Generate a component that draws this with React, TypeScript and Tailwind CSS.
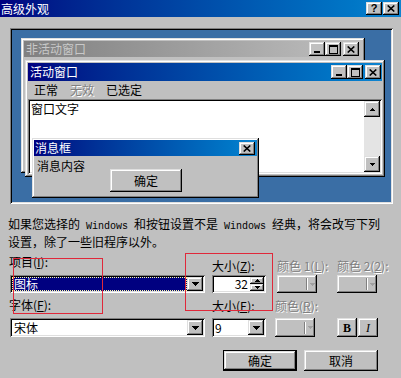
import clsx from "clsx"
import type { ReactNode } from "react"

const raised =
  "shadow-[inset_-1px_-1px_#000,inset_1px_1px_#dfdfdf,inset_-2px_-2px_#808080,inset_2px_2px_#fff]"
const sunken =
  "shadow-[inset_1px_1px_#808080,inset_-1px_-1px_#fff,inset_2px_2px_#000,inset_-2px_-2px_#dfdfdf]"
const disabledText = "text-[#808080] [text-shadow:1px_1px_0_#fff]"

function CloseGlyph() {
  return (
    <svg width="8" height="7" viewBox="0 0 8 7">
      <path d="M0.7 0.5L7.3 6.5M7.3 0.5L0.7 6.5" stroke="#000" strokeWidth="1.6" />
    </svg>
  )
}

function MinGlyph() {
  return (
    <svg width="8" height="8" viewBox="0 0 8 8" shapeRendering="crispEdges">
      <rect x="1" y="6" width="6" height="2" fill="#000" />
    </svg>
  )
}

function MaxGlyph() {
  return (
    <svg width="9" height="9" viewBox="0 0 9 9" shapeRendering="crispEdges">
      <rect x="0.5" y="0.5" width="8" height="8" fill="none" stroke="#000" />
      <rect x="0" y="0" width="9" height="2" fill="#000" />
    </svg>
  )
}

function DownArrow({ disabled }: { disabled?: boolean }) {
  return (
    <svg width="7" height="4" viewBox="0 0 7 4" shapeRendering="crispEdges">
      <path
        d="M0 0h7v1h-1v1h-1v1h-1v1h-1v-1h-1v-1h-1v-1h-1z"
        fill={disabled ? "#808080" : "#000"}
      />
    </svg>
  )
}

function SmallArrow({ up, disabled }: { up?: boolean; disabled?: boolean }) {
  return (
    <svg width="5" height="3" viewBox="0 0 5 3" shapeRendering="crispEdges">
      <path
        d={up ? "M2 0h1v1h1v1h1v1h-5v-1h1v-1h1z" : "M0 0h5v1h-1v1h-1v1h-1v-1h-1v-1h-1z"}
        fill={disabled ? "#a0a0a0" : "#000"}
      />
    </svg>
  )
}

function CapButton({
  children,
  className,
}: {
  children?: ReactNode
  className?: string
}) {
  return (
    <div
      className={clsx(
        "flex shrink-0 items-center justify-center bg-[#c0c0c0]",
        raised,
        className,
      )}
    >
      {children}
    </div>
  )
}

function Combo({
  children,
  className,
}: {
  children?: ReactNode
  className?: string
}) {
  return (
    <div className={clsx("flex bg-white p-[2px]", sunken, className)}>
      <div className="flex min-w-0 flex-1 items-center">{children}</div>
      <CapButton className="w-[16px]">
        <DownArrow />
      </CapButton>
    </div>
  )
}

function ColorButton({ className }: { className?: string }) {
  return (
    <div className={clsx("flex w-[40px] items-center bg-[#c0c0c0]", raised, className)}>
      <div className="flex-1" />
      <div className="h-[12px] border-l border-r border-l-[#808080] border-r-white" />
      <div className="flex w-[9px] justify-center">
        <SmallArrow disabled />
      </div>
    </div>
  )
}

function Mono({ children }: { children: ReactNode }) {
  return (
    <span className="font-['Liberation_Mono',monospace] text-[10px] whitespace-pre">
      {children}
    </span>
  )
}

export default function App() {
  return (
    <div className="relative h-[378px] w-[401px] overflow-hidden bg-[#c0c0c0] font-['Noto_Sans_CJK_SC',sans-serif] text-[12px] text-black">
      {/* title bar */}
      <div className="flex h-[17px] items-center bg-linear-to-r from-[#000080] to-[#1084d0] pr-[2px] pl-[1px]">
        <span className="leading-[14px] text-white">高级外观</span>
        <div className="ml-auto flex gap-[1px]">
          <CapButton className="h-[13px] w-[16px] font-['Liberation_Sans',sans-serif] text-[11px] leading-none font-bold">
            ?
          </CapButton>
          <CapButton className="h-[13px] w-[16px]">
            <CloseGlyph />
          </CapButton>
        </div>
      </div>

      {/* preview */}
      <div className={clsx("relative mt-[11px] ml-[10px] h-[176px] w-[383px] bg-[#3a6ea5]", sunken)}>
        {/* inactive window */}
        <div className={clsx("absolute top-[10px] left-[11px] h-[135px] w-[344px] bg-[#c0c0c0] p-[3px]", raised)}>
          <div className="flex h-[16px] items-center bg-linear-to-r from-[#808080] to-[#c0c0c0] pr-[3px] pl-[2px]">
            <span className="leading-[14px] text-[#c8c8c8]">非活动窗口</span>
            <div className="ml-auto flex">
              <CapButton className="h-[14px] w-[16px]">
                <MinGlyph />
              </CapButton>
              <CapButton className="h-[14px] w-[16px]">
                <MaxGlyph />
              </CapButton>
              <CapButton className="ml-[2px] h-[14px] w-[16px]">
                <CloseGlyph />
              </CapButton>
            </div>
          </div>
        </div>

        {/* active window */}
        <div className={clsx("absolute top-[32px] left-[15px] flex h-[117px] w-[360px] flex-col bg-[#c0c0c0] p-[3px]", raised)}>
          <div className="flex h-[18px] shrink-0 items-center bg-linear-to-r from-[#000080] to-[#1084d0] pr-[1px] pl-[2px]">
            <span className="leading-[14px] text-white">活动窗口</span>
            <div className="ml-auto flex">
              <CapButton className="h-[14px] w-[16px]">
                <MinGlyph />
              </CapButton>
              <CapButton className="h-[14px] w-[16px]">
                <MaxGlyph />
              </CapButton>
              <CapButton className="ml-[2px] h-[14px] w-[16px]">
                <CloseGlyph />
              </CapButton>
            </div>
          </div>
          <div className="flex h-[18px] shrink-0 items-center gap-[12px] pl-[6px] leading-[14px]">
            <span>正常</span>
            <span className={disabledText}>无效</span>
            <span>已选定</span>
          </div>
          <div className={clsx("flex min-h-0 flex-1 bg-white p-[2px]", sunken)}>
            <div className="flex-1 pt-[1px] pl-[1px] leading-[14px]">窗口文字</div>
            <div className="flex w-[16px] flex-col">
              <CapButton className="h-[16px]">
                <SmallArrow up />
              </CapButton>
              <div className="flex-1 bg-[#e4e4e4]" />
              <CapButton className="h-[16px]">
                <SmallArrow />
              </CapButton>
            </div>
          </div>
        </div>

        {/* message box */}
        <div className={clsx("absolute top-[110px] left-[22px] h-[60px] w-[227px] bg-[#c0c0c0] p-[2px]", raised)}>
          <div className="flex h-[16px] items-center bg-linear-to-r from-[#000080] to-[#1084d0] pr-[2px] pl-[1px]">
            <span className="leading-[14px] text-white">消息框</span>
            <CapButton className="ml-auto h-[13px] w-[16px]">
              <CloseGlyph />
            </CapButton>
          </div>
          <div className="flex pl-[3px]">
            <div className="w-[73px] pt-[4px] leading-[12px]">消息内容</div>
            <CapButton className="mt-[13px] h-[23px] w-[72px] leading-none">确定</CapButton>
          </div>
        </div>
      </div>

      {/* description */}
      <p className="mt-[12px] ml-[8px] leading-[15px] whitespace-nowrap">
        如果您选择的<Mono> Windows </Mono>和按钮设置不是<Mono> Windows </Mono>经典，将会改写下列
        <br />
        设置，除了一些旧程序以外。
      </p>

      {/* row 1 */}
      <div className="mt-[6px] ml-[10px] flex">
        <div className="w-[195px]">
          <div className="-ml-[1px] h-[20px] leading-[14px]">
            项目(<u>I</u>):
          </div>
          <Combo className="h-[18px]">
            <div className="flex h-full flex-1 items-center border border-dotted border-[#ffffa0] bg-[#000080] pl-[1px] leading-none text-white">
              图标
            </div>
          </Combo>
        </div>
        <div className="ml-[7px] w-[54px]">
          <div className="h-[20px] pt-[4px] leading-[14px] whitespace-nowrap">
            大小(<u>Z</u>):
          </div>
          <div className={clsx("flex h-[18px] bg-white p-[2px]", sunken)}>
            <div className="flex-1 pr-[2px] text-right leading-[14px]">32</div>
            <div className="flex w-[14px] flex-col">
              <CapButton className="h-[7px]">
                <SmallArrow up />
              </CapButton>
              <CapButton className="h-[7px]">
                <SmallArrow />
              </CapButton>
            </div>
          </div>
        </div>
        <div className="ml-[11px] w-[40px]">
          <div className={clsx("h-[20px] pt-[4px] leading-[14px] whitespace-nowrap", disabledText)}>
            颜色 1(<u>L</u>):
          </div>
          <ColorButton className="h-[18px]" />
        </div>
        <div className="ml-[20px] w-[40px]">
          <div className={clsx("h-[20px] pt-[4px] leading-[14px] whitespace-nowrap", disabledText)}>
            颜色 2(<u>2</u>):
          </div>
          <ColorButton className="h-[18px]" />
        </div>
      </div>

      {/* row 2 */}
      <div className="mt-[4px] ml-[10px] flex">
        <div className="w-[195px]">
          <div className="-ml-[1px] h-[21px] pt-[1px] leading-[14px]">
            字体(<u>F</u>):
          </div>
          <Combo className="h-[19px]">
            <span className="pl-[2px] leading-[14px]">宋体</span>
          </Combo>
        </div>
        <div className="ml-[7px] w-[54px]">
          <div className="h-[21px] pt-[2px] leading-[14px] whitespace-nowrap">
            大小(<u>E</u>):
          </div>
          <Combo className="h-[19px]">
            <span className="pl-[1px] leading-[14px]">9</span>
          </Combo>
        </div>
        <div className="ml-[9px] w-[40px]">
          <div className={clsx("h-[21px] pt-[2px] leading-[14px] whitespace-nowrap", disabledText)}>
            颜色(<u>R</u>):
          </div>
          <ColorButton className="h-[19px]" />
        </div>
        <div className="mt-[21px] ml-[22px] flex gap-[1px]">
          <CapButton className="h-[19px] w-[20px] font-['Liberation_Serif',serif] text-[12px] leading-none font-bold">
            B
          </CapButton>
          <CapButton className="h-[19px] w-[20px] font-['Liberation_Serif',serif] text-[12px] leading-none italic">
            I
          </CapButton>
        </div>
      </div>

      {/* dialog buttons */}
      <div className="mt-[13px] ml-[223px] flex gap-[7px]">
        <div className="border border-black">
          <CapButton className="h-[19px] w-[72px] leading-none">确定</CapButton>
        </div>
        <CapButton className="h-[21px] w-[74px] leading-none">取消</CapButton>
      </div>

      {/* annotation rectangles */}
      <div className="pointer-events-none absolute top-[258px] left-[13px] h-[56px] w-[90px] border border-[#e0283a]" />
      <div className="pointer-events-none absolute top-[253px] left-[185px] h-[58px] w-[88px] border border-[#e0283a]" />
    </div>
  )
}
